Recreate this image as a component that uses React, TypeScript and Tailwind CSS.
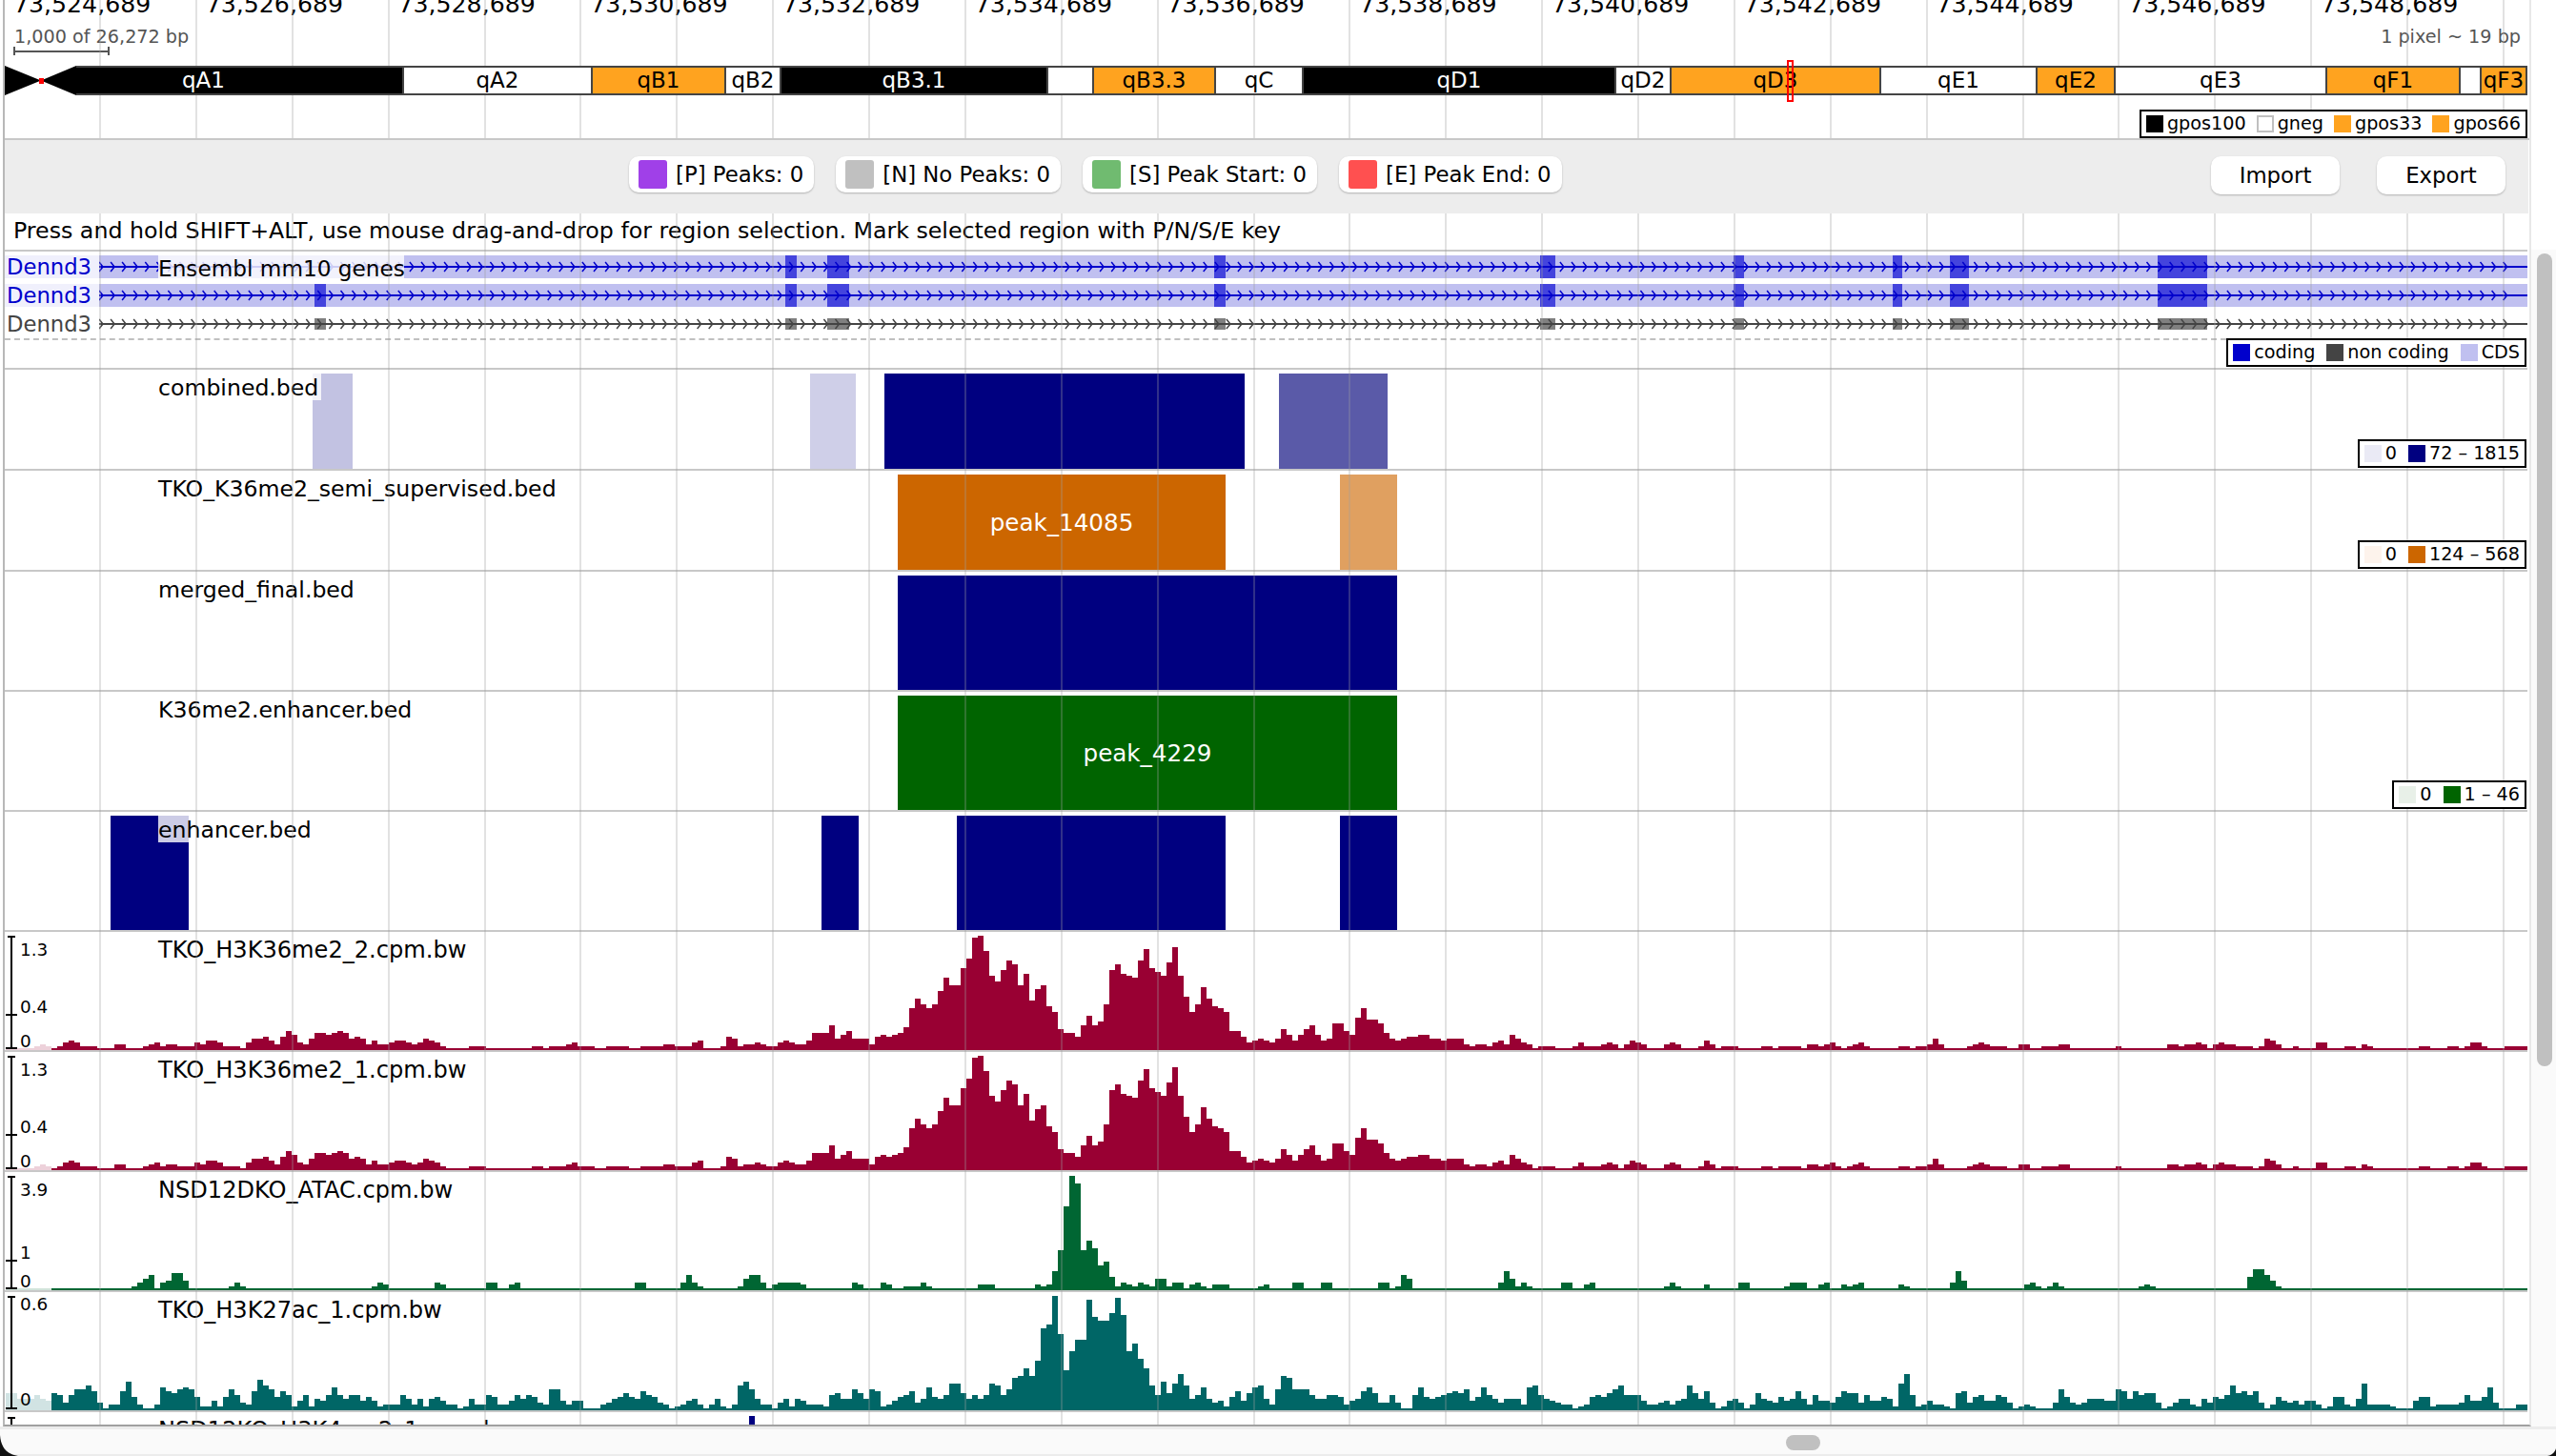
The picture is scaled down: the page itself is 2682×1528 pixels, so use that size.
const GRID = Array.from({ length: 26 }, (_, i) => Math.round(104 + i * 100.88) - 5);
const TICKS = ["73,524,689", "73,526,689", "73,528,689", "73,530,689", "73,532,689", "73,534,689", "73,536,689", "73,538,689", "73,540,689", "73,542,689", "73,544,689", "73,546,689", "73,548,689"];

// band name, right edge on the page, colour
const BANDS: [string, number, string][] = [
  ["qA1", 424, "k"], ["qA2", 622, "w"], ["qB1", 762, "o"], ["qB2", 820, "w"], ["qB3.1", 1100, "k"], ["", 1148, "w"],
  ["qB3.3", 1276, "o"], ["qC", 1368, "w"], ["qD1", 1696, "k"], ["qD2", 1754, "w"], ["qD3", 1974, "o"], ["qE1", 2138, "w"],
  ["qE2", 2220, "o"], ["qE3", 2442, "w"], ["qF1", 2582, "o"], ["", 2604, "w"], ["qF3", 2652, "o"],
];

const EXONS: [number, number][] = [[824, 836], [868, 891], [1274, 1286], [1616, 1632], [1819, 1830], [1986, 1996], [2046, 2066], [2264, 2316]];

// "2*3 4" => [2, 2, 2, 4]
function runs(s: string) {
  return s.split(" ").flatMap((t) => {
    const [v, n] = t.split("*").map(Number);
    return Array(n || 1).fill(v) as number[];
  });
}

const K36 = [
  "2 4 8 10 8 4 4 4 2 2 2 6 6 2 2 2 4 6 8 4 6 6 4 4 4 8 6 10 10 8 4 4 4 2 8 12 12 14 10 6 14 20 16 8 6 12 18 18 16 18 20 18 12 14 12 6 10 6 6 8 10 10 8 6 8 12 10 8 4 2 2",
  "2*2 4*3 2*8 4*2 2 4*3 6 8 4*3 2*2 4*4 2*2 4*4 6*2 4*3 8 10 2*3 4 14 12 4 6*2 8 6 4 4 8 10 8 6 6 10 18*3 26 12 16 20 12",
  "12 12 6 14 16 14 16 18 24 44 54 48 44 48 62 76 68 68 86 96 118 120 104 78 72 84 94 90 68 80 52 64 68 46 40 22 18 18 14 26 36 26 30 48 84 90 80 78 76 94 106 86 82 78 92 108 78 56 40 48 66 54 46 44 40 20 20 14 8 10 12 10 8 12 22 16 10 16 22 26 16 10 12",
  "28 28 20 16 34 44 32 32 28 18 12 10 12 14 14 16 16 12 12 10 12 12 12 6 4 6 6 4 8 10 6 16 12 8 6 2 4 4 4 2 2 2 4 8 4 4 4 6 8 6 2 6 10 8 6 2 2 2 6 8 6 2 2 2 4 10 6 2 4 4 4 2 2 2 2 4 4 2 4 4 4 4 2 6 6 4 6",
  "8 4 2 4 6 8 4 2*5 4 4 2 4 4 6 12 6 2*4 4 6 8 6 4*3 2 2 6 6 2 2 4*3 6 6 2*8 4 2*8 6 6 4 6 6 8 6 2 6 8 6 6 4*3 2 4 12 10 6 2 2 4 2*3 8 8",
  "2*3 4 4 2 6 4 2*8 4 4 2*3 4 4 2 4 8 8 4 2*3 4*4",
].join(" ");

const ATAC = [
  "2*14 4 8 12 16 2 8 10 18 18 10 2*7 4 8 4 2*22 4 8 6 2*8 8 6 2 2",
  "2*5 8 8 2 2 6 8 2*20 8 8 2*6 8 16 8 4 2*6 4 12 16 16 8 2 6 8*4 6 2*8 8",
  "6 2 2 2 8 6 2 2 4 4 4 8 4 2*8 6 6 6 2*7 6 4 6 20 42 88 120 112 42 52 44 26 30 14 4 8 6 4 8 6 4 12 12 4 8 8 2 6 8 4 2 6 6 6 2*5 4 6 2*4 8 8 2 2 2 8 8",
  "2*8 8 8 2 4 16 12 2*15 8 20 12 4 8 4 2*5 8 8 2 2 6 8 2*12 4 8 4 2*4 6 2*5 8 8 2*6 4 8*3 2 2 6 8",
  "2 2 6 4 6 8 2*6 6 4 2*7 8 20 10 2*10 6 8 4 2 4 8 4 2*13 4 6 4 2*16 14 22 22 16 10 4 2*8",
  "2*35",
].join(" ");

const K27 = [
  "18 16 8 16 22 22 26 20 8 2 6 6 20 30 14 6 2 2 6 24 20 18 22 24 22 14 4 4 10 4 14 22 16 8 6 20 32 26 22 14 20 16 4 10 16 4 12 10 16 24 16 12 16 16 10 14 10 4 6 6 6 16 12 6 12 4 12 14 10 6 6",
  "2 4 12 6 6 16 14 6 6 10 16 12 16 14 8 6 22 22 10 6 10 10 2 2 2 6 8 12 14 18 14 12 20 16 14 8 6 2 4 6 10 12 6 2 6 12 4 2 6 26 30 22 12 6 6 2 8 12 4 12 10 6 6 6 4 16 18 12 12 22",
  "18 12 22 20 4 6 10 14 16 20 8 12 24 14 12 16 28 28 18 12 16 12 16 28 26 16 22 34 36 44 36 52 86 90 120 80 42 62 74 74 116 98 94 94 102 118 100 62 70 54 44 26 16 30 18 28 38 26 12 16 24 12 8 10 4 14 20 10 18 24 26 12 6 22 36 34 22 22 22 16 12 12 16",
  "16 14 6 10 12 20 24 18 8 8 16 8 2 2 16 24 14 12 14 16 18 20 18 22 10 14 24 16 12 8 12 12 12 6 24 26 16 12 10 8 6 6 2 4 6 14 16 14 18 22 26 16 16 16 10 6 6 8 10 6 10 12 26 18 12 20 8 2 4 10 12 8 2 6 18 12 10 8 14 10 12 20 12 6 16 10 10",
  "8 14 20 18 18 8 16 10 10 14 12 4 28 38 16 4 6 10 6 6 4 2 18 20 8 14 16 10 10 16 14 8 2 4 6 4 2 2 2 8 22 14 8 6 8 12 12 12 10 10 22 20 12 20 16 18 18 8 2 4 8 12 12 6 4 12 8 14 12 16 26 18 20 16 20 8 2 6 14 10 8 10 6 10 10 6 2",
  "4 14 14 6 4 12 28 6 6 6 6 4 2 2 2 10 14 14 4 6 6 6 6 8 16 10 10 14 24 8 2 2 2 6 6",
].join(" ");

function barPath(values: number[], startX: number) {
  return values.map((h, i) => `M${startX + i * 6 - 5} 124h6v-${h}h-6z`).join("");
}

function chevrons(cy: number) {
  let d = "";
  for (let x = 0; x < 2532; x += 12.07) d += `M${x.toFixed(1)} ${cy - 5}l4 5l-4 5`;
  return d;
}

function GridLines() {
  return (
    <div className="pointer-events-none absolute inset-0 z-10">
      {GRID.map((x) => (
        <div key={x} className="absolute top-0 bottom-0 w-[2px] bg-[rgba(160,160,160,0.3)]" style={{ left: x }} />
      ))}
    </div>
  );
}

type Item = { color: string; label: string; outline?: boolean };

function Legend({ items, className }: { items: Item[]; className: string }) {
  return (
    <div className={`z-20 flex h-[30px] items-center gap-[12px] border-2 border-black bg-white px-[5px] text-[19.2px] ${className}`}>
      {items.map((item) => (
        <div key={item.label} className="flex items-center gap-[4px]">
          <span className={`h-[18px] w-[18px] ${item.outline ? "border-2 border-[#c0c0c0]" : ""}`} style={{ background: item.color }} />
          <span>{item.label}</span>
        </div>
      ))}
    </div>
  );
}

function Pill({ color, label }: { color: string; label: string }) {
  return (
    <div className="flex h-[38px] items-center gap-[9px] rounded-[10px] bg-white pr-[11px] pl-[10px] text-[22.8px] shadow-[0_1px_2px_rgba(0,0,0,0.25)]">
      <span className="h-[30px] w-[30px] rounded-[3px]" style={{ background: color }} />
      <span>{label}</span>
    </div>
  );
}

function ToolButton({ label }: { label: string }) {
  return (
    <div className="flex h-[40px] w-[135px] items-center justify-center rounded-[10px] bg-white text-[22.8px] shadow-[0_1px_2px_rgba(0,0,0,0.25)]">
      {label}
    </div>
  );
}

function GeneRow({ name, color, band, exons }: { name: string; color: string; band: boolean; exons: [number, number][] }) {
  return (
    <div className="flex h-[24px]">
      <div className={`w-[99px] pl-[2px] text-[22.7px] leading-[24px] ${band ? "bg-[#f0f0fc]" : ""}`} style={{ color }}>
        {name}
      </div>
      <svg width="2548" height="24" className="block" shapeRendering="crispEdges">
        {band && <rect width="2548" height="24" fill="#c0c0f0" />}
        {exons.map(([a, b]) =>
          band ? (
            <rect key={a} x={a - 104} width={b - a} height="24" fill="#4444dd" />
          ) : (
            <rect key={a} x={a - 104} y="6" width={b - a} height="12" fill="#808080" />
          ),
        )}
        <rect y="11" width="2548" height="2" fill={color} />
        <path d={chevrons(12)} fill="none" stroke={color} strokeWidth="1.5" shapeRendering="auto" />
      </svg>
    </div>
  );
}

type Block = { from: number; to: number; color: string; text?: string };

function BedTrack({ name, height, blocks, legend }: { name: string; height: string; blocks: Block[]; legend?: Item[] }) {
  return (
    <div className={`relative w-[2647px] border-b-2 border-[#c8c8c8] ${height}`}>
      {blocks.map((b) => (
        <div
          key={b.from}
          className="absolute top-[4px] bottom-0 flex items-center justify-center pt-[2px] text-[24.6px] text-white"
          style={{ left: b.from - 5, width: b.to - b.from, background: b.color }}
        >
          {b.text}
        </div>
      ))}
      <div className="absolute top-[4px] left-[161px] h-[28px] bg-white/80 pr-[3px] text-[23.6px] leading-[30px]">{name}</div>
      {legend && <Legend items={legend} className="absolute right-[1px] bottom-[1px]" />}
    </div>
  );
}

type Mark = { y: number; label: string; tick?: boolean };

function Axis({ marks }: { marks: Mark[] }) {
  return (
    <>
      <div className="absolute top-[4px] left-[6px] h-[119px] w-[2px] bg-black" />
      <div className="absolute top-[4px] left-[3px] h-[2px] w-[8px] bg-black" />
      <div className="absolute top-[121px] left-[1px] h-[2px] w-[12px] bg-black" />
      {marks.map((m) => (
        <div key={m.label}>
          {m.tick && <div className="absolute left-[1px] h-[2px] w-[12px] bg-black" style={{ top: m.y + 7 }} />}
          <div className="absolute left-[16px] text-[18.4px] leading-[20px]" style={{ top: m.y - 10 }}>
            {m.label}
          </div>
        </div>
      ))}
    </>
  );
}

function BigwigTrack({ name, color, path, faded, marks }: { name: string; color: string; path: string; faded: string; marks: Mark[] }) {
  return (
    <div className="relative h-[126px] w-[2647px] border-b-2 border-[#c8c8c8]">
      <svg width="2647" height="124" className="block" shapeRendering="crispEdges">
        <path d={faded} fill={color} fillOpacity="0.18" />
        <path d={path} fill={color} />
      </svg>
      <Axis marks={marks} />
      <div className="absolute top-[5px] left-[161px] text-[24.1px] leading-[28px]">{name}</div>
    </div>
  );
}

const genes = [
  { name: "Dennd3", color: "#0000cc", band: true, exons: EXONS },
  { name: "Dennd3", color: "#0000cc", band: true, exons: [[330, 342], ...EXONS] as [number, number][] },
  { name: "Dennd3", color: "#444444", band: false, exons: [[330, 342], ...EXONS] as [number, number][] },
];

const NAVY = "#000080";

export default function App() {
  const k36Path = barPath(runs(K36), 54);
  const k36Faded = barPath(runs("2 2 2 2 2 4 6 4"), 6);
  const atacPath = barPath(runs(ATAC), 54);
  const atacFaded = barPath(runs("2*8"), 6);
  const k27Path = barPath(runs(K27), 54);
  const k27Faded = barPath(runs("18 18 12 12 12 16 12 10"), 6);

  return (
    <div className="flex h-[1528px] w-[2682px] flex-col overflow-hidden bg-white [font-family:'DejaVu_Sans',sans-serif] text-black">
      <div className="flex h-[1497px]">
        <main className="ml-[3px] flex h-[1497px] w-[2653px] flex-col border-r-2 border-b-2 border-l-2 border-r-[#e8e8e8] border-b-[#a0a0a0] border-l-[#b8b8b8]">
          {/* ruler and ideogram */}
          <header className="relative h-[147px] border-b-2 border-[#c8c8c8]">
            <GridLines />
            <div className="relative -mt-[5px] flex h-[20px] pl-[9px] text-[25.2px] leading-[20px]">
              {TICKS.map((t) => (
                <span key={t} className="w-[201.75px] shrink-0 whitespace-nowrap">
                  {t}
                </span>
              ))}
            </div>
            <div className="relative mt-[14px] flex h-[20px] w-[2640px] justify-between pl-[10px] text-[19.2px] leading-[20px] text-[#555555]">
              <span>1,000 of 26,272 bp</span>
              <span>1 pixel ~ 19 bp</span>
            </div>
            <div className="relative ml-[9px] flex h-[9px] w-[101px] items-center border-x-2 border-[#555555]">
              <div className="h-[2px] w-full bg-[#555555]" />
            </div>
            <div className="relative z-20 mt-[11px] flex h-[31px] w-[2647px]">
              <svg width="75" height="31" className="block shrink-0">
                <path d="M0 0L38 15.5L75 0V31L38 15.5L0 31Z" fill="#000" />
                <rect x="36" y="13" width="5" height="6" fill="#ff0000" />
              </svg>
              <div className="flex flex-1 border-y-2 border-r-2 border-[#444444] text-[23px] leading-[27px]">
                {BANDS.map(([name, end, tone], i) => (
                  <div
                    key={end}
                    className={`flex shrink-0 justify-center border-[#444444] last:border-r-0 ${i < BANDS.length - 1 ? "border-r-2" : ""} ${i === 0 ? "pr-[75px]" : ""} ${
                      tone === "k" ? "bg-black text-white" : tone === "o" ? "bg-[#ffa31f]" : "bg-white"
                    }`}
                    style={{ width: end - (i === 0 ? 80 : BANDS[i - 1][1]) - (i === BANDS.length - 1 ? 2 : 0) }}
                  >
                    {name}
                  </div>
                ))}
              </div>
            </div>
            <div className="absolute top-[63px] left-[1870px] z-30 h-[44px] w-[7px] border-2 border-[#ff0000]" />
            <div className="relative z-20 mt-[15px] flex w-[2647px] justify-end">
              <Legend
                className="!gap-[11px]"
                items={[
                  { color: "#000000", label: "gpos100" },
                  { color: "#ffffff", label: "gneg", outline: true },
                  { color: "#ffa31f", label: "gpos33" },
                  { color: "#ffa31f", label: "gpos66" },
                ]}
              />
            </div>
          </header>

          {/* annotation toolbar */}
          <div className="flex h-[77px] w-[2648px] shrink-0 items-start bg-[#ededed] pt-[17px]">
            <div className="ml-[655px] flex gap-[23px]">
              <Pill color="#a040e8" label="[P] Peaks: 0" />
              <Pill color="#c0c0c0" label="[N] No Peaks: 0" />
              <Pill color="#70bb70" label="[S] Peak Start: 0" />
              <Pill color="#ff5050" label="[E] Peak End: 0" />
            </div>
            <div className="mr-[24px] ml-auto flex gap-[39px]">
              <ToolButton label="Import" />
              <ToolButton label="Export" />
            </div>
          </div>

          {/* tracks */}
          <div className="relative flex-1 overflow-hidden">
            <GridLines />
            <div className="flex h-[40px] w-[2647px] items-center border-b-2 border-[#c8c8c8] bg-white pl-[9px] text-[23.7px]">
              Press and hold SHIFT+ALT, use mouse drag-and-drop for region selection. Mark selected region with P/N/S/E key
            </div>

            <section className="relative h-[124px] w-[2647px] border-b-2 border-[#c8c8c8] pt-[4px]">
              <div className="flex flex-col gap-[6px]">
                {genes.map((g, i) => (
                  <GeneRow key={i} name={g.name} color={g.color} band={g.band} exons={g.exons} />
                ))}
              </div>
              <div className="absolute top-[4px] left-[161px] h-[24px] w-[258px] bg-white/80 text-[23.2px] leading-[28px] whitespace-nowrap">Ensembl mm10 genes</div>
              <div className="absolute top-[91px] left-0 w-[2331px] border-t-2 border-dashed border-[#c0c0c0]" />
              <Legend
                className="absolute right-[1px] bottom-[1px]"
                items={[
                  { color: "#0000cc", label: "coding" },
                  { color: "#444444", label: "non coding" },
                  { color: "#c0c0f0", label: "CDS" },
                ]}
              />
            </section>

            <BedTrack
              name="combined.bed"
              height="h-[106px]"
              blocks={[
                { from: 328, to: 370, color: "#c2c2e2" },
                { from: 850, to: 898, color: "#cfcfe8" },
                { from: 928, to: 1306, color: NAVY },
                { from: 1342, to: 1456, color: "#5a5aa8" },
              ]}
              legend={[{ color: "#eaeaf5", label: "0" }, { color: NAVY, label: "72 – 1815" }]}
            />
            <BedTrack
              name="TKO_K36me2_semi_supervised.bed"
              height="h-[106px]"
              blocks={[
                { from: 942, to: 1286, color: "#cc6600", text: "peak_14085" },
                { from: 1406, to: 1466, color: "#e0a060" },
              ]}
              legend={[{ color: "#fdf3ec", label: "0" }, { color: "#cc6600", label: "124 – 568" }]}
            />
            <BedTrack name="merged_final.bed" height="h-[126px]" blocks={[{ from: 942, to: 1466, color: NAVY }]} />
            <BedTrack
              name="K36me2.enhancer.bed"
              height="h-[126px]"
              blocks={[{ from: 942, to: 1466, color: "#006400", text: "peak_4229" }]}
              legend={[{ color: "#e8f0e8", label: "0" }, { color: "#006400", label: "1 – 46" }]}
            />
            <BedTrack
              name="enhancer.bed"
              height="h-[126px]"
              blocks={[
                { from: 116, to: 198, color: NAVY },
                { from: 862, to: 901, color: NAVY },
                { from: 1004, to: 1286, color: NAVY },
                { from: 1406, to: 1466, color: NAVY },
              ]}
            />

            <BigwigTrack
              name="TKO_H3K36me2_2.cpm.bw"
              color="#990033"
              path={k36Path}
              faded={k36Faded}
              marks={[{ y: 19, label: "1.3" }, { y: 79, label: "0.4", tick: true }, { y: 115, label: "0" }]}
            />
            <BigwigTrack
              name="TKO_H3K36me2_1.cpm.bw"
              color="#990033"
              path={k36Path}
              faded={k36Faded}
              marks={[{ y: 19, label: "1.3" }, { y: 79, label: "0.4", tick: true }, { y: 115, label: "0" }]}
            />
            <BigwigTrack
              name="NSD12DKO_ATAC.cpm.bw"
              color="#006633"
              path={atacPath}
              faded={atacFaded}
              marks={[{ y: 19, label: "3.9" }, { y: 85, label: "1", tick: true }, { y: 115, label: "0" }]}
            />
            <BigwigTrack
              name="TKO_H3K27ac_1.cpm.bw"
              color="#006666"
              path={k27Path}
              faded={k27Faded}
              marks={[{ y: 13, label: "0.6" }, { y: 113, label: "0" }]}
            />

            {/* next track, cut off by the panel */}
            <div className="relative h-[13px] w-[2647px]">
              <div className="absolute top-[5px] left-[6px] h-[20px] w-[2px] bg-black" />
              <div className="absolute top-[5px] left-[3px] h-[2px] w-[8px] bg-black" />
              <div className="absolute top-[4px] left-[781px] h-[10px] w-[6px] bg-[#000080]" />
              <div className="absolute top-[5px] left-[161px] whitespace-nowrap text-[24.1px] leading-[28px]">NSD12KO_H3K4me2_1.cpm.bw</div>
            </div>
          </div>
        </main>

        {/* vertical scrollbar */}
        <aside className="flex flex-1 flex-col">
          <div className="h-[262px] shrink-0 bg-white" />
          <div className="flex-1 bg-[#fafafa] pt-[4px] pl-[6px]">
            <div className="h-[853px] w-[16px] rounded-full bg-[#c0c0c0]" />
          </div>
        </aside>
      </div>

      {/* horizontal scrollbar */}
      <footer className="relative flex-1 border-t-[3px] border-b-2 border-[#ececec] bg-[#fafafa]">
        <div className="absolute top-[6px] left-[1874px] h-[16px] w-[36px] rounded-full bg-[#c0c0c0]" />
        <svg width="20" height="22" className="absolute bottom-[-2px] left-0">
          <path d="M0 0C1 12 6 20 19 22H0Z" fill="#111" />
        </svg>
        <svg width="14" height="8" className="absolute right-0 bottom-[-2px]">
          <path d="M14 0C13 4 10 7 5 8H14Z" fill="#111" />
        </svg>
      </footer>
    </div>
  );
}
